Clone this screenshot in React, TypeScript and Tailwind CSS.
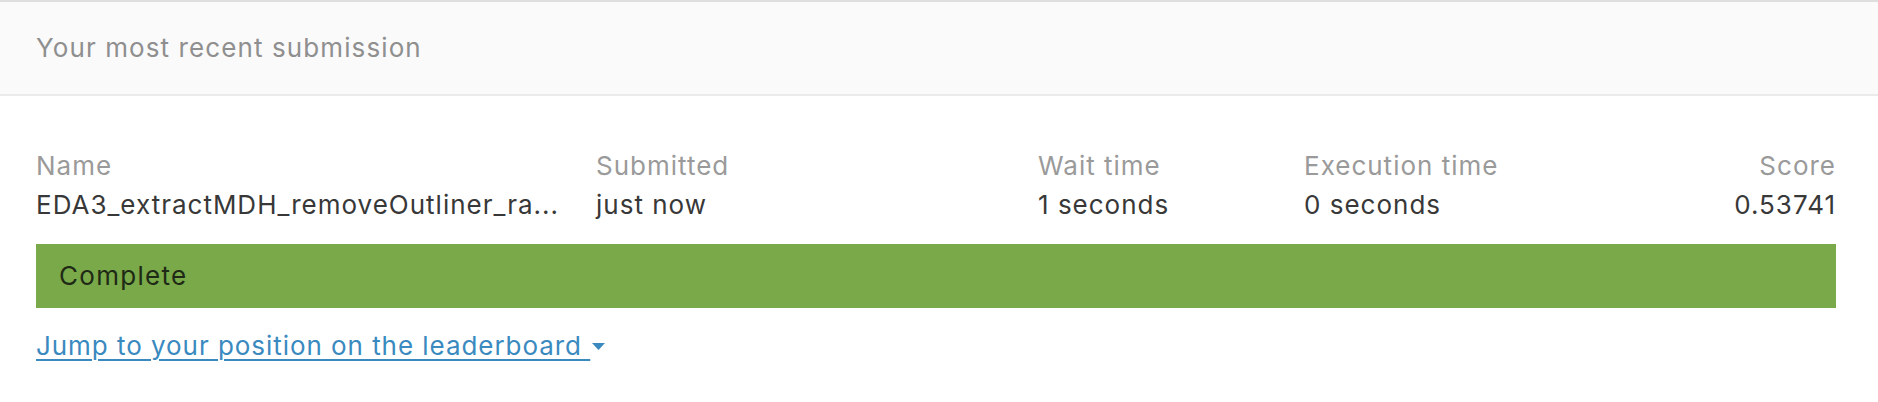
import React from "react";

interface Column {
  label: string;
  value: string;
  align?: "left" | "right";
}

const columns: Column[] = [
  { label: "Name", value: "EDA3_extractMDH_removeOutliner_ra..." },
  { label: "Submitted", value: "just now" },
  { label: "Wait time", value: "1 seconds" },
  { label: "Execution time", value: "0 seconds" },
  { label: "Score", value: "0.53741", align: "right" }
];

const App: React.FC = () => {
  return (
    <div className="w-[1878px] h-[402px] bg-white font-['Inter','Liberation_Sans',sans-serif]">
      <div className="h-[96px] border-t-2 border-t-[#dedede] border-b-2 border-b-[#ebebeb] bg-[#fafafa] flex items-center pl-9 pr-[42px]">
        <h2 className="text-[26px] leading-[36px] tracking-[1.1px] text-[#8f8f8f]">Your most recent submission</h2>
      </div>

      <div className="pl-9 pr-[42px] pt-[51px]">
        <div className="grid grid-cols-[560px_442px_266px_1fr_auto] text-[26px] leading-[37px] tracking-[1px]">
          {columns.map((col) => (
            <div key={col.label} className={col.align === "right" ? "text-right" : ""}>
              <div className="text-[#9a9a9a]">{col.label}</div>
              <div className="mt-[2px] text-[#383838] whitespace-nowrap">{col.value}</div>
            </div>
          ))}
        </div>

        <div className="mt-[21px] h-[64px] bg-[#79a949] flex items-center px-[23px]">
          <span className="text-[26px] leading-[36px] tracking-[1.3px] text-[#1f2a16]">Complete</span>
        </div>

        <div className="mt-[20px]">
          <a href="#" className="inline-flex items-center text-[26px] leading-[36px] tracking-[0.95px] text-[#3a8ac0]">
            <span className="underline underline-offset-[4px] decoration-[2px] whitespace-pre">Jump to your position on the leaderboard </span>
            <svg width="13" height="7" viewBox="0 0 13 7" className="ml-[2px]">
              <path d="M0 0h13L6.5 7z" fill="#3a8ac0" />
            </svg>
          </a>
        </div>
      </div>
    </div>
  );
};

export default App;
